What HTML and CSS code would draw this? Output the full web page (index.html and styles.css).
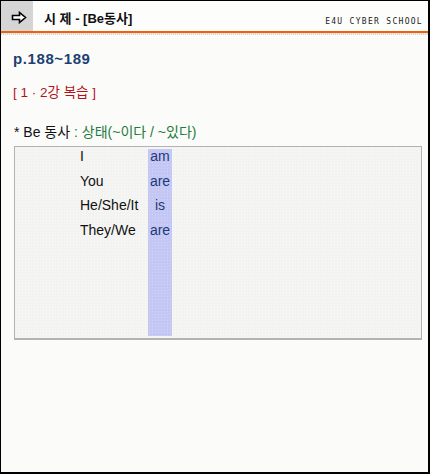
FILE: index.html
```html
<!DOCTYPE html>
<html lang="ko">
<head>
<meta charset="utf-8">
<link rel="stylesheet" href="styles.css">
</head>
<body>
<div class="frame">
  <div class="header">
    <div class="icon-box">
      <svg width="16" height="13" viewBox="0 0 16 13" class="arrow">
        <path d="M1.5 4.5 H8.5 V1.5 L14.5 6.5 L8.5 11.5 V8.5 H1.5 Z" fill="#fff" stroke="#000" stroke-width="1.6" stroke-linejoin="miter"/>
      </svg>
    </div>
    <div class="title">시 제 - [Be동사]</div>
    <div class="brand">E4U CYBER SCHOOL</div>
  </div>
  <div class="rule"></div>
  <div class="shadow"></div>
  <div class="content">
    <div class="pages">p.188~189</div>
    <div class="review">[ 1 · 2강 복습 ]</div>
    <div class="topic">* Be 동사 <span class="green">: 상태(~이다 / ~있다)</span></div>
    <div class="box">
      <div class="table">
        <div class="subj">I</div><div class="verb">am</div>
        <div class="subj">You</div><div class="verb">are</div>
        <div class="subj">He/She/It</div><div class="verb">is</div>
        <div class="subj">They/We</div><div class="verb">are</div>
        <div class="subj"></div><div class="verb"></div>
      </div>
    </div>
  </div>
</div>
</body>
</html>
```
FILE: styles.css
```css
html, body {
  margin: 0;
  padding: 0;
  background: #fbfcfa;
}
.frame {
  width: 427px;
  height: 471px;
  border-top: 1px solid #000;
  border-left: 1px solid #000;
  border-right: 2px solid #000;
  border-bottom: 2px solid #000;
  background: #fbfcfa;
  font-family: "Liberation Sans", "Noto Sans CJK KR", sans-serif;
  font-size: 14px;
  overflow: hidden;
}
.header {
  display: flex;
  align-items: center;
  height: 30px;
  background: #fdfdfc;
}
.icon-box {
  width: 32px;
  height: 30px;
  background: #d5d5d5;
  display: flex;
  align-items: center;
  justify-content: center;
}
.arrow {
  margin-top: 2px;
  margin-left: 4px;
}
.title {
  margin-left: 11px;
  font-weight: bold;
  font-size: 13px;
  color: #111;
  margin-top: 2px;
}
.brand {
  margin-left: auto;
  margin-right: 5px;
  margin-top: 10px;
  font-family: "DejaVu Sans Mono", monospace;
  font-size: 8px;
  letter-spacing: 1.3px;
  color: #222;
}
.rule {
  height: 2px;
  background: #f0600a;
}
.shadow {
  height: 2px;
  background: repeating-linear-gradient(90deg, #d8d8d8 0 1px, #f2f2f2 1px 2px);
}
.content {
  padding: 15px 0 0 12px;
}
.pages {
  font-size: 15px;
  line-height: 17px;
  height: 17px;
  letter-spacing: 0.6px;
  font-weight: bold;
  color: #1d3f73;
}
.review {
  margin-top: 18px;
  font-size: 13.5px;
  line-height: 15px;
  height: 15px;
  color: #b3121a;
}
.topic {
  margin-top: 24px;
  margin-left: 1px;
  font-size: 14px;
  line-height: 16px;
  height: 16px;
  color: #111;
}
.green {
  color: #1d7b3c;
}
.box {
  margin-top: 6px;
  margin-left: 1px;
  width: 404px;
  height: 187px;
  padding: 2px 1px 2px 1px;
  border: 1px solid #b3b3b3;
  border-bottom-width: 2px;
  background-color: #f3f4f1;
  background-image: radial-gradient(#fbfbfa 0.6px, transparent 0.8px);
  background-size: 3px 3px;
}
.table {
  display: grid;
  grid-template-columns: 68px 24px;
  grid-template-rows: 24.5px 24.5px 24.5px 24.5px 1fr;
  margin-left: 64px;
  height: 100%;
}
.subj {
  line-height: 14px;
  color: #111;
}
.verb {
  line-height: 14px;
  background-color: #c4c7f4;
  background-image: radial-gradient(#d2d4f7 0.6px, transparent 0.8px);
  background-size: 3px 3px;
  color: #1c3a78;
  text-align: center;
}
```
